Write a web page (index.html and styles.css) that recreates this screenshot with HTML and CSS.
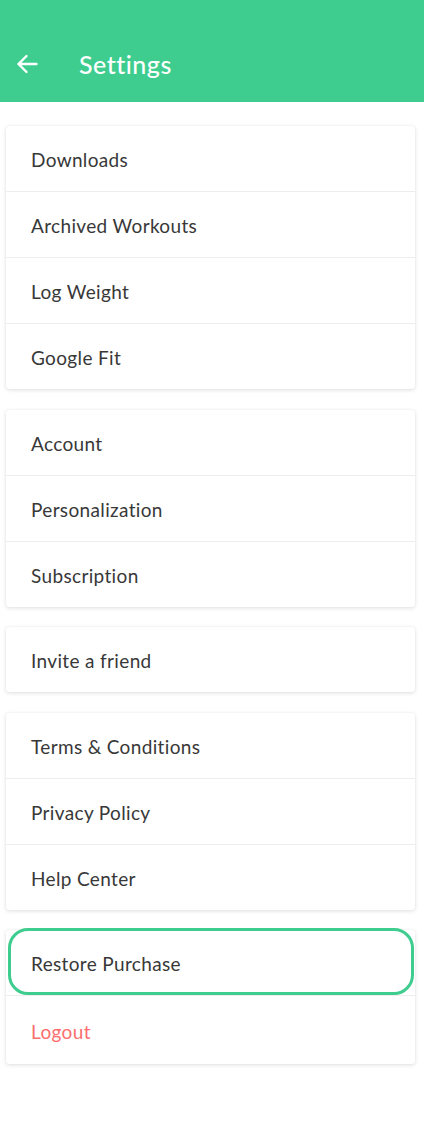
FILE: index.html
```html
<!DOCTYPE html>
<html>
<head>
<meta charset="utf-8">
<link rel="stylesheet" href="styles.css">
</head>
<body>
<header class="topbar">
  <svg class="back" width="22" height="20" viewBox="0 0 22 20" aria-hidden="true">
    <path d="M20.5 10H2.5M10.5 2L2.5 10L10.5 18" fill="none" stroke="#fff" stroke-width="2.4" stroke-linecap="round" stroke-linejoin="round"/>
  </svg>
  <h1 class="title">Settings</h1>
</header>
<main class="list">
  <section class="card">
    <div class="row">Downloads</div>
    <div class="row">Archived Workouts</div>
    <div class="row">Log Weight</div>
    <div class="row">Google Fit</div>
  </section>
  <section class="card">
    <div class="row">Account</div>
    <div class="row">Personalization</div>
    <div class="row">Subscription</div>
  </section>
  <section class="card">
    <div class="row">Invite a friend</div>
  </section>
  <section class="card">
    <div class="row">Terms &amp; Conditions</div>
    <div class="row">Privacy Policy</div>
    <div class="row">Help Center</div>
  </section>
  <section class="card">
    <div class="row focused">Restore Purchase</div>
    <div class="row logout">Logout</div>
  </section>
</main>
</body>
</html>
```
FILE: styles.css
```css
* { box-sizing: border-box; }
html, body { margin: 0; padding: 0; background: #fff; }
body {
  font-family: "Lato", "Noto Sans", sans-serif;
  color: #383838;
  width: 424px;
}
.topbar {
  height: 102px;
  background: #3ecd8f;
  display: flex;
  align-items: center;
  padding: 26px 0 0 16px;
}
.back { flex: none; display: block; }
.title {
  margin: 0 0 0 41px;
  font-size: 25px;
  line-height: 30px;
  font-weight: 500;
  color: #fff;
  letter-spacing: 0.5px;
}
.list {
  display: flex;
  flex-direction: column;
  gap: 20.5px;
  padding: 24px 9px 40px 6px;
}
.card {
  background: #fff;
  border-radius: 3px;
  box-shadow: 0 1px 4px rgba(0,0,0,0.13), 0 0 1px rgba(0,0,0,0.08);
}
.row {
  height: 66px;
  display: flex;
  align-items: center;
  padding: 2px 0 0 25px;
  font-size: 19px;
  letter-spacing: 0.35px;
  border-bottom: 1px solid #ededed;
  position: relative;
}
.row:last-child { border-bottom: none; height: 65px; }
.row.logout:last-child { color: #fc6e6e; height: 68px; }
.focused::after {
  content: "";
  position: absolute;
  top: -2px; left: 2px; right: 1px; bottom: 0;
  border: 3px solid #3ecd8f;
  border-radius: 20px;
}
```
